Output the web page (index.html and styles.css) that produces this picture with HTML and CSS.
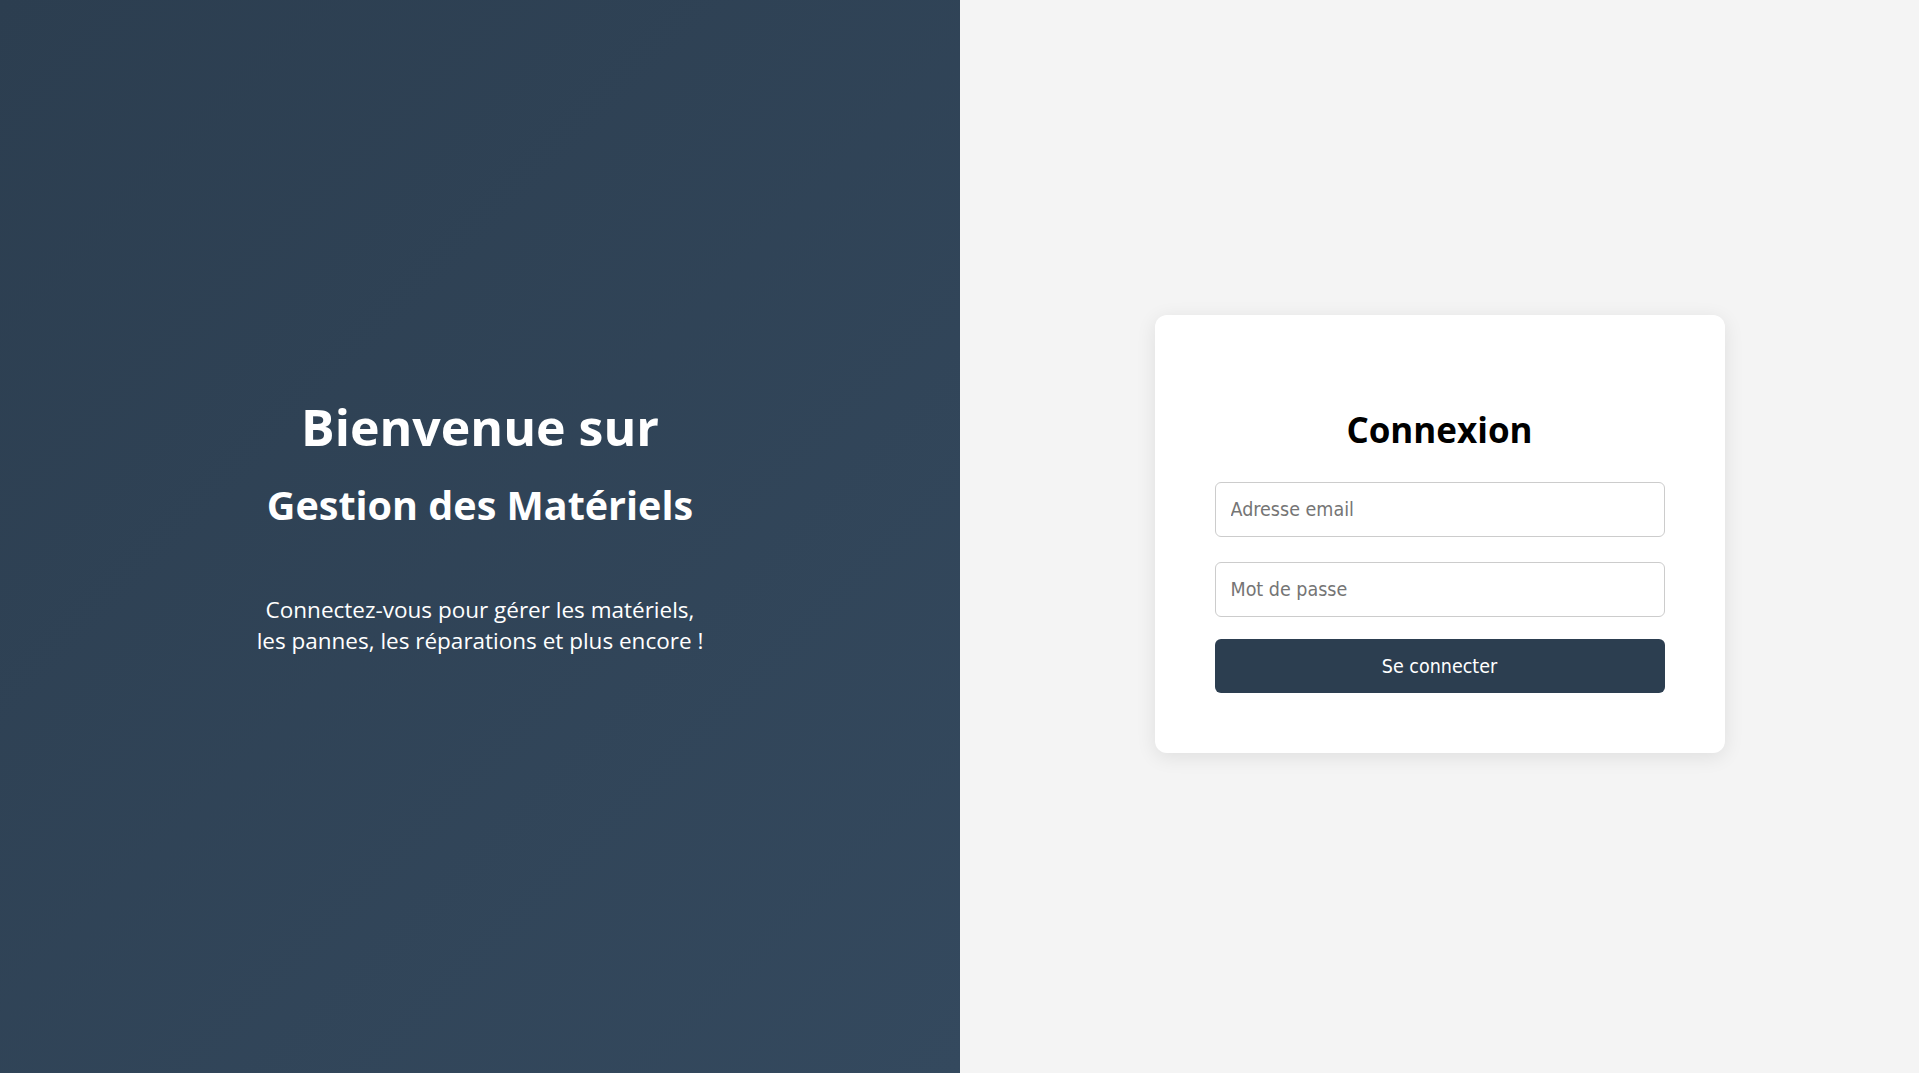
FILE: index.html
```html
<!DOCTYPE html>
<html lang="fr">
<head>
<meta charset="utf-8">
<title>Connexion - Gestion des Matériels</title>
<link rel="stylesheet" href="styles.css">
</head>
<body>
<div class="page">
  <section class="welcome">
    <div class="welcome-inner">
      <h1 class="welcome-title">Bienvenue sur</h1>
      <h2 class="welcome-subtitle">Gestion des Matériels</h2>
      <p class="welcome-text">Connectez-vous pour gérer les matériels,<br>les pannes, les réparations et plus encore !</p>
    </div>
  </section>
  <section class="login">
    <form class="card">
      <h2 class="card-title">Connexion</h2>
      <input class="field field-email" type="email" placeholder="Adresse email">
      <input class="field field-password" type="password" placeholder="Mot de passe">
      <button class="submit" type="button">Se connecter</button>
    </form>
  </section>
</div>
</body>
</html>
```

FILE: styles.css
```css
* { box-sizing: border-box; }
html, body { margin: 0; padding: 0; height: 100%; }
body { font-family: "Open Sans", "Noto Sans", sans-serif; }

.page {
  display: flex;
  width: 100%;
  height: 100vh;
}

.welcome {
  flex: 0 0 960px;
  background: linear-gradient(135deg, #2c3e50 0%, #34495e 100%);
  color: #ffffff;
  display: flex;
  align-items: center;
  justify-content: center;
  text-align: center;
}
.welcome-inner { margin-bottom: 20px; }
.welcome-title {
  margin: 0;
  font-size: 50px;
  line-height: 58px;
  font-weight: 700;
}
.welcome-subtitle {
  margin: 25px 0 0;
  font-size: 39.5px;
  line-height: 48px;
  font-weight: 700;
}
.welcome-text {
  margin: 65px 0 0;
  font-size: 22.5px;
  line-height: 31px;
  font-weight: 400;
}

.login {
  flex: 1;
  background: #f4f4f4;
  display: flex;
  align-items: center;
  justify-content: center;
}

.card {
  width: 570px;
  padding: 60px;
  margin-bottom: 5px;
  background: #ffffff;
  border-radius: 12px;
  box-shadow: 0 4px 20px rgba(0, 0, 0, 0.09);
  display: flex;
  flex-direction: column;
}
.card-title {
  margin: 31px 0 28px;
  text-align: center;
  font-size: 35px;
  line-height: 48px;
  font-weight: 700;
  color: #000000;
}
.field {
  height: 55px;
  width: 100%;
  padding: 0 15px;
  border: 1px solid #cccccc;
  border-radius: 6px;
  background: #ffffff;
  font-family: "DejaVu Sans Condensed", "DejaVu Sans", sans-serif;
  font-stretch: condensed;
  font-size: 19.5px;
  color: #333333;
}
.field::placeholder { color: #757575; }
.field-email { margin-bottom: 25px; }
.field-password { margin-bottom: 22px; }
.submit {
  height: 54px;
  width: 100%;
  border: none;
  border-radius: 6px;
  background: #2c3e50;
  color: #ffffff;
  font-family: "DejaVu Sans Condensed", "DejaVu Sans", sans-serif;
  font-stretch: condensed;
  font-size: 19.5px;
  cursor: pointer;
}
```
